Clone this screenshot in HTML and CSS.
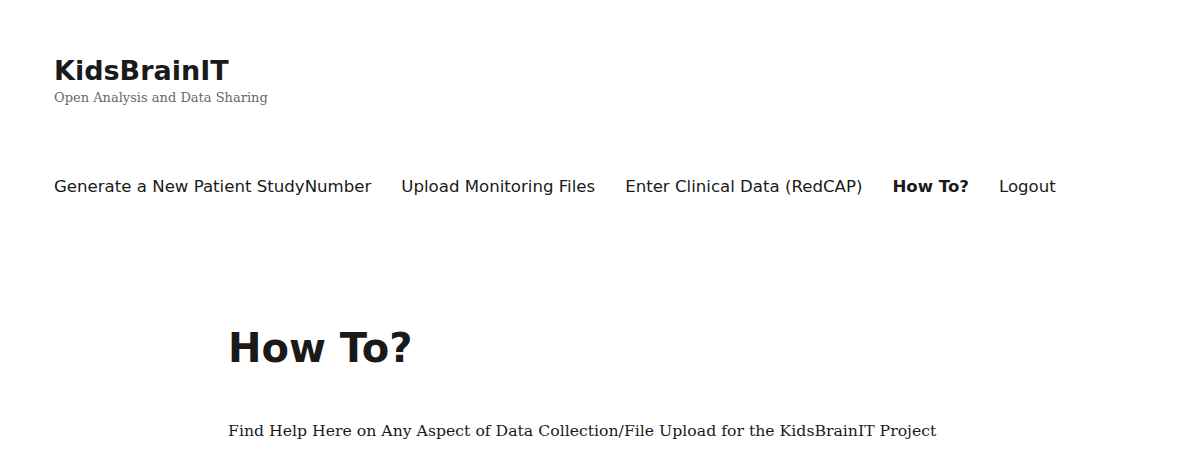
FILE: index.html
```html
<!DOCTYPE html>
<html lang="en">
<head>
<meta charset="utf-8">
<title>How To? – KidsBrainIT</title>
<link rel="stylesheet" href="styles.css">
</head>
<body>
<header class="site-header">
  <div class="branding">
    <p class="site-title">KidsBrainIT</p>
    <p class="site-description">Open Analysis and Data Sharing</p>
  </div>
  <nav class="main-nav">
    <a href="#">Generate a New Patient StudyNumber</a>
    <a href="#">Upload Monitoring Files</a>
    <a href="#">Enter Clinical Data (RedCAP)</a>
    <a href="#" class="current">How To?</a>
    <a href="#">Logout</a>
  </nav>
</header>
<main class="content">
  <h1 class="entry-title">How To?</h1>
  <p class="entry-text">Find Help Here on Any Aspect of Data Collection/File Upload for the KidsBrainIT Project</p>
</main>
</body>
</html>
```
FILE: styles.css
```css
html, body {
  margin: 0;
  padding: 0;
  background: #fff;
  color: #1a1a1a;
}
body {
  font-family: "DejaVu Serif", serif;
}
.site-header {
  padding: 53px 54px 0;
}
.branding p {
  margin: 0;
}
.site-title {
  font-family: "DejaVu Sans", sans-serif;
  font-weight: 700;
  font-size: 27px;
  line-height: 35px;
}
.site-description {
  font-family: "DejaVu Serif", serif;
  font-size: 13px;
  line-height: 20px;
  color: #686868;
  margin-top: 5px;
}
.main-nav {
  display: flex;
  gap: 30px;
  margin-top: 67px;
}
.main-nav a {
  font-family: "DejaVu Sans", sans-serif;
  font-size: 16.6px;
  line-height: 24px;
  color: #1a1a1a;
  text-decoration: none;
}
.main-nav a.current {
  font-weight: 700;
}
.content {
  padding: 124px 0 0 228px;
}
.entry-title {
  font-family: "DejaVu Sans", sans-serif;
  font-weight: 700;
  font-size: 40px;
  line-height: 50px;
  margin: 0;
}
.entry-text {
  font-family: "DejaVu Serif", serif;
  font-size: 15.7px;
  line-height: 28px;
  margin: 44px 0 0;
}
```
